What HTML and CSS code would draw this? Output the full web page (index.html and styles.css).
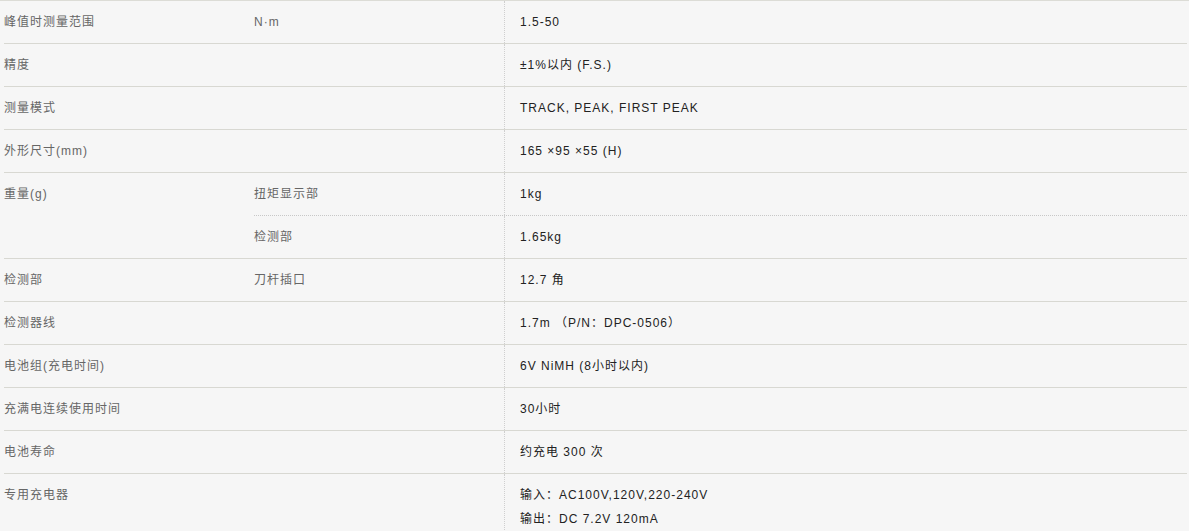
FILE: index.html
```html
<!DOCTYPE html>
<html lang="zh-CN">
<head>
<meta charset="utf-8">
<title>规格</title>
<link rel="stylesheet" href="styles.css">
</head>
<body>
<div class="specs">
  <div class="table">
    <div class="row">
      <div class="label">峰值时测量范围</div>
      <div class="subs"><div class="sub"><div class="unit">N·m</div><div class="val">1.5-50</div></div></div>
    </div>
    <div class="row">
      <div class="label">精度</div>
      <div class="subs"><div class="sub"><div class="unit"></div><div class="val">±1%以内 (F.S.)</div></div></div>
    </div>
    <div class="row">
      <div class="label">测量模式</div>
      <div class="subs"><div class="sub"><div class="unit"></div><div class="val">TRACK, PEAK, FIRST PEAK</div></div></div>
    </div>
    <div class="row">
      <div class="label">外形尺寸(mm)</div>
      <div class="subs"><div class="sub"><div class="unit"></div><div class="val">165 ×95 ×55 (H)</div></div></div>
    </div>
    <div class="row">
      <div class="label">重量(g)</div>
      <div class="subs">
        <div class="sub"><div class="unit">扭矩显示部</div><div class="val">1kg</div></div>
        <div class="sub"><div class="unit">检测部</div><div class="val">1.65kg</div></div>
      </div>
    </div>
    <div class="row">
      <div class="label">检测部</div>
      <div class="subs"><div class="sub"><div class="unit">刀杆插口</div><div class="val">12.7 角</div></div></div>
    </div>
    <div class="row">
      <div class="label">检测器线</div>
      <div class="subs"><div class="sub"><div class="unit"></div><div class="val">1.7m （P/N：DPC-0506）</div></div></div>
    </div>
    <div class="row">
      <div class="label">电池组(充电时间)</div>
      <div class="subs"><div class="sub"><div class="unit"></div><div class="val">6V NiMH (8小时以内)</div></div></div>
    </div>
    <div class="row">
      <div class="label">充满电连续使用时间</div>
      <div class="subs"><div class="sub"><div class="unit"></div><div class="val">30小时</div></div></div>
    </div>
    <div class="row">
      <div class="label">电池寿命</div>
      <div class="subs"><div class="sub"><div class="unit"></div><div class="val">约充电 300 次</div></div></div>
    </div>
    <div class="row last">
      <div class="label">专用充电器</div>
      <div class="subs"><div class="sub"><div class="unit"></div><div class="val">输入：AC100V,120V,220-240V<br>输出：DC 7.2V 120mA</div></div></div>
    </div>
  </div>
</div>
</body>
</html>
```

FILE: styles.css
```css
html, body {
  margin: 0;
  padding: 0;
  background: #f6f6f6;
}

body {
  font-family: "Liberation Sans", Arial, "Noto Sans CJK SC", sans-serif;
  font-size: 12px;
  letter-spacing: 1px;
}

.specs {
  border-top: 2px solid #dcdcd6;
  margin-top: -1px;
}

.table {
  margin: 0 2px 0 4px;
}

.row {
  display: flex;
  border-bottom: 1px solid #d8d8d2;
}

.row.last {
  border-bottom: none;
  min-height: 60px;
}

.label {
  width: 250px;
  flex: none;
  padding: 9px 0;
  line-height: 24px;
  color: #666;
}

.subs {
  flex: 1;
  display: flex;
  flex-direction: column;
}

.sub {
  display: flex;
  flex: 1;
}

.sub + .sub {
  border-top: 1px dotted #c8c8c8;
}

.unit {
  width: 250px;
  flex: none;
  padding: 9px 0;
  line-height: 24px;
  color: #666;
}

.val {
  flex: 1;
  border-left: 1px dotted #cfcfcf;
  padding: 9px 0 9px 15px;
  line-height: 24px;
  color: #222;
}
```
